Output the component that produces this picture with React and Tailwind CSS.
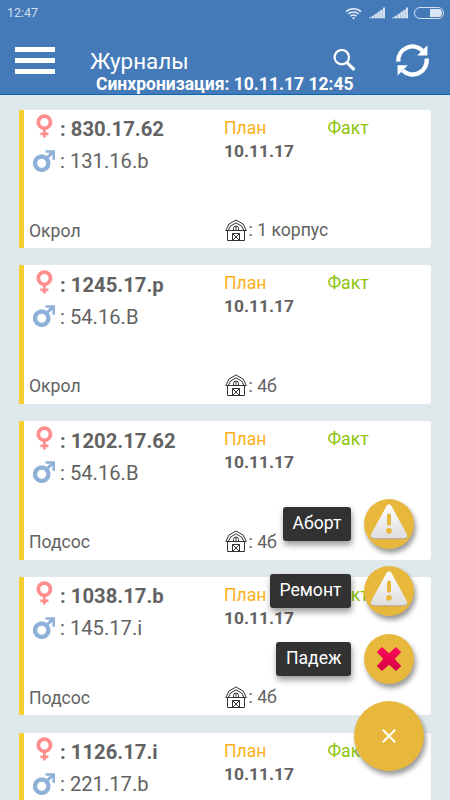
import React from 'react';

const entries = [
  { female: '830.17.62', male: '131.16.b', state: 'Окрол', place: '1 корпус' },
  { female: '1245.17.p', male: '54.16.B', state: 'Окрол', place: '4б' },
  { female: '1202.17.62', male: '54.16.B', state: 'Подсос', place: '4б' },
  { female: '1038.17.b', male: '145.17.i', state: 'Подсос', place: '4б' },
  { female: '1126.17.i', male: '221.17.b', state: 'Подсос', place: '4б' },
];

function Female() {
  return (
    <svg className="ml-[2px] block h-6 w-[17px]" viewBox="0 0 17 24" fill="none" stroke="#ff8f8f">
      <circle cx="8.4" cy="8.2" r="6.1" strokeWidth="3.8" />
      <path d="M8.4 15v8.5M4.4 19.8h8" strokeWidth="2.8" />
    </svg>
  );
}

function Male() {
  return (
    <svg className="block h-[22px] w-[22px]" viewBox="0 0 22 22" fill="none" stroke="#8fb0d8">
      <circle cx="8.7" cy="13.2" r="6.7" strokeWidth="4.3" />
      <path d="M13 8.8l6.8-6.7" strokeWidth="3" />
      <path d="M12.6 1.5h8.1v8.2" strokeWidth="2.6" />
    </svg>
  );
}

function Barn() {
  return (
    <svg className="block h-[23px] w-[22px]" viewBox="0 0 22 23" fill="none" stroke="#333" strokeWidth="1">
      <path d="M.8 11.5L4 5 11.1 1l7 4 3.200 6.500h-2.400L16.600 7 11.100 3.900 5.600 7 3.200 11.500z" />
      <path d="M2.500 11.500v10h17v-10M3 11.500h16" />
      <path d="M8.500 11.500V9.500a2.500 2.500 0 0 1 5 0v2M11 7v4.500" />
      <path d="M7.500 21.500v-7h7v7M7.500 14.500l7 7M14.500 14.500l-7 7" />
    </svg>
  );
}

function Card({ entry }) {
  return (
    <article className="grid h-[138.6px] shrink-0 grid-cols-[200px_103.5px_1fr] rounded-l-[1px] rounded-r-[3px] border-l-5 border-[#f5ce32] bg-white text-[#626262]">
      <div className="flex flex-col pl-[5px]">
        <div className="flex h-[37px] items-center pl-[4px]">
          <div className="w-[27px] pb-[4px] pl-[1px]"><Female /></div>
          <span className="pt-[2px] text-[20.3px] font-bold leading-6">: {entry.female}</span>
        </div>
        <div className="flex h-[28px] items-center pl-[4px]">
          <div className="w-[27px]"><Male /></div>
          <span className="pt-[1px] text-[20.2px] leading-6">: {entry.male}</span>
        </div>
        <div className="mt-auto pb-[7.5px] text-[17.6px] leading-5">{entry.state}</div>
      </div>
      <div className="flex flex-col pt-[6px]">
        <div className="text-[17.6px] leading-6 text-[#fbb01c]">План</div>
        <div className="text-[17.4px] font-bold leading-[23.5px]">10.11.17</div>
        <div className="mt-auto flex items-center pb-[6.5px] text-[17.6px] leading-[22px]">
          <div className="ml-[1px] mr-[1.5px]"><Barn /></div>
          <span className="whitespace-nowrap">: {entry.place}</span>
        </div>
      </div>
      <div className="pt-[6px] text-[17.6px] leading-6 text-[#8cc40a]">Факт</div>
    </article>
  );
}

function Signal() {
  return (
    <svg className="block h-[12px] w-[16px]" viewBox="0 0 16 12" fill="#d5e0f0">
      <path d="M0 11l2-1v1zM3 9h2v2H3zM6 7h2v4H6zM8.7 5h2v6h-2zM11.3 3h2v8h-2zM14 .5h2V11h-2z" />
      <path d="M0 11L16 .5V11.4H0z" opacity=".6" />
    </svg>
  );
}

function Header() {
  return (
    <header className="flex h-[95px] shrink-0 flex-col border-b border-[#0868b1] bg-[#457ab9] text-white">
      <div className="flex h-[26px] items-center pl-[7px] pr-[6px] text-[#d1deef]">
        <span className="text-[12.5px]">12:47</span>
        <svg className="ml-auto h-[13px] w-[17px]" viewBox="0 0 17 13" fill="none" stroke="#e0e8f4" strokeWidth="1.5">
          <path d="M1 4.6a11 11 0 0 1 15 0M3.2 7a7.7 7.7 0 0 1 10.6 0M5.5 9.3a4.4 4.4 0 0 1 6 0" />
          <circle cx="8.5" cy="11.2" r="1.1" fill="#e0e8f4" stroke="none" />
        </svg>
        <div className="ml-[7px]"><Signal /></div>
        <div className="ml-[7px]"><Signal /></div>
        <div className="ml-[6px] flex h-[11.5px] w-[30px] justify-end overflow-hidden rounded-full border border-[#d5e0f0] p-[1px]">
          <div className="h-full w-[12px] rounded-r-full bg-[#dce5f2]" />
        </div>
      </div>
      <div className="flex h-[68px]">
        <div className="flex w-[90px] flex-col gap-[6.5px] pl-[15px] pt-[21px]">
          <div className="h-[4.5px] w-[40px] bg-white" />
          <div className="h-[4.5px] w-[40px] bg-white" />
          <div className="h-[4.5px] w-[40px] bg-white" />
        </div>
        <div className="flex w-[290px] flex-col pt-[21px]">
          <div className="flex h-[27px] items-center justify-between pr-[24px]">
            <span className="pt-[1px] text-[22.4px] leading-7">Журналы</span>
            <svg className="h-[23px] w-[23px]" viewBox="0 0 23 23" fill="none" stroke="white">
              <circle cx="8.8" cy="8.2" r="7.2" strokeWidth="2.2" />
              <path d="M13.8 13.4l7.6 7.5" strokeWidth="3.2" />
            </svg>
          </div>
          <div className="whitespace-nowrap pl-[6px] text-[17.5px] font-bold leading-5">Синхронизация: 10.11.17 12:45</div>
        </div>
        <svg className="ml-[15px] mt-[17px] h-[35px] w-[35px]" viewBox="0 0 35 35" fill="none" stroke="white" strokeWidth="4.4">
          <path d="M3.3 18.7a14.2 14.2 0 0 1 24-11.200M31.7 15.5a14.2 14.2 0 0 1-24 12" />
          <path d="M32.4 2.3v10.3H22.2zM2.6 32.6V22.2h10.2z" fill="white" stroke="none" />
        </svg>
      </div>
    </header>
  );
}

function Warning() {
  return (
    <svg className="mb-[4px] h-[38px] w-[40px] drop-shadow-[0_1px_0px_#b5a58a]" viewBox="0 0 42 40">
      <defs>
        <linearGradient id="warn" x1="0" y1="0" x2="0" y2="1">
          <stop stopColor="#fff" />
          <stop offset="1" stopColor="#dedede" />
        </linearGradient>
      </defs>
      <path d="M18.5 3q2.5-3.5 5 0l16.2 29.6q1.6 4-2.7 4.4H5Q.7 36.6 2.3 32.6z" fill="url(#warn)" />
      <rect x="18.9" y="11" width="4.2" height="13" rx="2.1" fill="#e8b83d" />
      <circle cx="21" cy="29.3" r="3" fill="#e8b83d" />
    </svg>
  );
}

function Cross() {
  return (
    <svg className="h-[26px] w-[26px]" viewBox="0 0 26 26">
      <defs>
        <linearGradient id="cross" x1="0" y1="0" x2="0" y2="1">
          <stop stopColor="#ff0b5a" />
          <stop offset="1" stopColor="#d30044" />
        </linearGradient>
      </defs>
      <path d="M6 1L13 7.3 20 1 25.2 6.1 18.7 13 25.2 19.9 20 25 13 18.7 6 25 .8 19.9 7.3 13 .8 6.1z" fill="url(#cross)" />
    </svg>
  );
}

function Action({ label, children }) {
  return (
    <div className="flex items-center gap-[13px]">
      <span className="flex h-[34px] items-center rounded-[3px] bg-[#323232] px-[9.5px] text-[17.6px] leading-none text-white shadow-[1px_4px_6px_rgba(0,0,0,0.4)]">{label}</span>
      <div className="flex h-[50px] w-[50px] items-center justify-center rounded-full bg-[#e8b83d] shadow-[2px_4px_5px_rgba(0,0,0,0.4)]">{children}</div>
    </div>
  );
}

export default function App() {
  return (
    <div className="relative flex h-[800px] w-[450px] flex-col overflow-hidden bg-[#dfe8eb] font-[Roboto,sans-serif]">
      <Header />
      <main className="flex min-h-0 flex-1 flex-col gap-[17.2px] overflow-hidden pl-[19px] pr-[19px] pt-[14.5px]">
        {entries.map((entry) => <Card key={entry.female} entry={entry} />)}
      </main>
      <div className="absolute bottom-[29px] right-[26px] flex flex-col items-end">
        <div className="mr-[10px] flex flex-col items-end gap-[17.5px]">
          <Action label="Аборт"><Warning /></Action>
          <Action label="Ремонт"><Warning /></Action>
          <Action label="Падеж"><Cross /></Action>
        </div>
        <button className="mt-[17.5px] flex h-[70px] w-[70px] items-center justify-center rounded-full bg-[#e8b83d] shadow-[2px_4px_5px_rgba(0,0,0,0.4)]">
          <svg className="h-[14px] w-[14px]" viewBox="0 0 14 14" fill="none" stroke="white" strokeWidth="2">
            <path d="M.8.8l12.4 12.4M13.2.8L.8 13.2" />
          </svg>
        </button>
      </div>
    </div>
  );
}
